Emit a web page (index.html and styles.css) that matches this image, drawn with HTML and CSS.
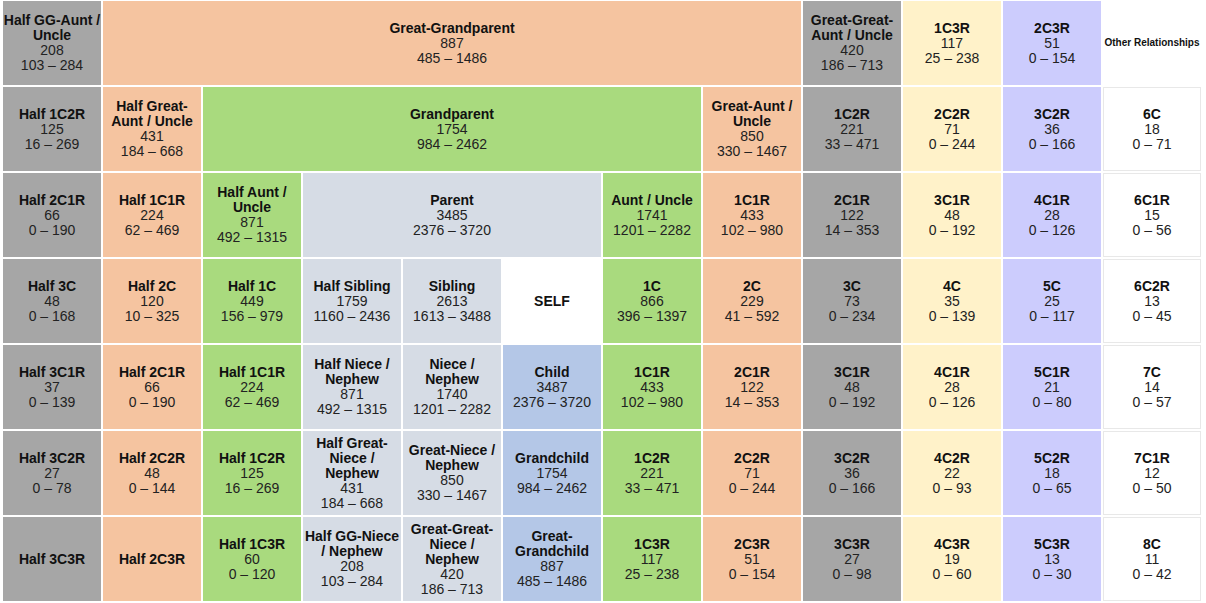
FILE: index.html
```html
<!DOCTYPE html>
<html>
<head>
<meta charset="utf-8">
<link rel="stylesheet" href="styles.css">
</head>
<body>
<div class="chart">
  <!-- Row 1 -->
  <div class="cell grey"><b>Half GG-Aunt / Uncle</b><span>208</span><span>103 – 284</span></div>
  <div class="cell peach span7"><b>Great-Grandparent</b><span>887</span><span>485 – 1486</span></div>
  <div class="cell grey"><b>Great-Great-<br>Aunt / Uncle</b><span>420</span><span>186 – 713</span></div>
  <div class="cell yellow"><b>1C3R</b><span>117</span><span>25 – 238</span></div>
  <div class="cell purple"><b>2C3R</b><span>51</span><span>0 – 154</span></div>
  <div class="cell note"><b>Other Relationships</b></div>

  <!-- Row 2 -->
  <div class="cell grey"><b>Half 1C2R</b><span>125</span><span>16 – 269</span></div>
  <div class="cell peach"><b>Half Great-<br>Aunt / Uncle</b><span>431</span><span>184 – 668</span></div>
  <div class="cell green span5"><b>Grandparent</b><span>1754</span><span>984 – 2462</span></div>
  <div class="cell peach"><b>Great-Aunt /<br>Uncle</b><span>850</span><span>330 – 1467</span></div>
  <div class="cell grey"><b>1C2R</b><span>221</span><span>33 – 471</span></div>
  <div class="cell yellow"><b>2C2R</b><span>71</span><span>0 – 244</span></div>
  <div class="cell purple"><b>3C2R</b><span>36</span><span>0 – 166</span></div>
  <div class="cell white"><b>6C</b><span>18</span><span>0 – 71</span></div>

  <!-- Row 3 -->
  <div class="cell grey"><b>Half 2C1R</b><span>66</span><span>0 – 190</span></div>
  <div class="cell peach"><b>Half 1C1R</b><span>224</span><span>62 – 469</span></div>
  <div class="cell green"><b>Half Aunt /<br>Uncle</b><span>871</span><span>492 – 1315</span></div>
  <div class="cell light span3"><b>Parent</b><span>3485</span><span>2376 – 3720</span></div>
  <div class="cell green"><b>Aunt / Uncle</b><span>1741</span><span>1201 – 2282</span></div>
  <div class="cell peach"><b>1C1R</b><span>433</span><span>102 – 980</span></div>
  <div class="cell grey"><b>2C1R</b><span>122</span><span>14 – 353</span></div>
  <div class="cell yellow"><b>3C1R</b><span>48</span><span>0 – 192</span></div>
  <div class="cell purple"><b>4C1R</b><span>28</span><span>0 – 126</span></div>
  <div class="cell white"><b>6C1R</b><span>15</span><span>0 – 56</span></div>

  <!-- Row 4 -->
  <div class="cell grey"><b>Half 3C</b><span>48</span><span>0 – 168</span></div>
  <div class="cell peach"><b>Half 2C</b><span>120</span><span>10 – 325</span></div>
  <div class="cell green"><b>Half 1C</b><span>449</span><span>156 – 979</span></div>
  <div class="cell light"><b>Half Sibling</b><span>1759</span><span>1160 – 2436</span></div>
  <div class="cell light"><b>Sibling</b><span>2613</span><span>1613 – 3488</span></div>
  <div class="cell self"><b>SELF</b></div>
  <div class="cell green"><b>1C</b><span>866</span><span>396 – 1397</span></div>
  <div class="cell peach"><b>2C</b><span>229</span><span>41 – 592</span></div>
  <div class="cell grey"><b>3C</b><span>73</span><span>0 – 234</span></div>
  <div class="cell yellow"><b>4C</b><span>35</span><span>0 – 139</span></div>
  <div class="cell purple"><b>5C</b><span>25</span><span>0 – 117</span></div>
  <div class="cell white"><b>6C2R</b><span>13</span><span>0 – 45</span></div>

  <!-- Row 5 -->
  <div class="cell grey"><b>Half 3C1R</b><span>37</span><span>0 – 139</span></div>
  <div class="cell peach"><b>Half 2C1R</b><span>66</span><span>0 – 190</span></div>
  <div class="cell green"><b>Half 1C1R</b><span>224</span><span>62 – 469</span></div>
  <div class="cell light"><b>Half Niece /<br>Nephew</b><span>871</span><span>492 – 1315</span></div>
  <div class="cell light"><b>Niece /<br>Nephew</b><span>1740</span><span>1201 – 2282</span></div>
  <div class="cell blue"><b>Child</b><span>3487</span><span>2376 – 3720</span></div>
  <div class="cell green"><b>1C1R</b><span>433</span><span>102 – 980</span></div>
  <div class="cell peach"><b>2C1R</b><span>122</span><span>14 – 353</span></div>
  <div class="cell grey"><b>3C1R</b><span>48</span><span>0 – 192</span></div>
  <div class="cell yellow"><b>4C1R</b><span>28</span><span>0 – 126</span></div>
  <div class="cell purple"><b>5C1R</b><span>21</span><span>0 – 80</span></div>
  <div class="cell white"><b>7C</b><span>14</span><span>0 – 57</span></div>

  <!-- Row 6 -->
  <div class="cell grey"><b>Half 3C2R</b><span>27</span><span>0 – 78</span></div>
  <div class="cell peach"><b>Half 2C2R</b><span>48</span><span>0 – 144</span></div>
  <div class="cell green"><b>Half 1C2R</b><span>125</span><span>16 – 269</span></div>
  <div class="cell light"><b>Half Great-<br>Niece /<br>Nephew</b><span>431</span><span>184 – 668</span></div>
  <div class="cell light"><b>Great-Niece /<br>Nephew</b><span>850</span><span>330 – 1467</span></div>
  <div class="cell blue"><b>Grandchild</b><span>1754</span><span>984 – 2462</span></div>
  <div class="cell green"><b>1C2R</b><span>221</span><span>33 – 471</span></div>
  <div class="cell peach"><b>2C2R</b><span>71</span><span>0 – 244</span></div>
  <div class="cell grey"><b>3C2R</b><span>36</span><span>0 – 166</span></div>
  <div class="cell yellow"><b>4C2R</b><span>22</span><span>0 – 93</span></div>
  <div class="cell purple"><b>5C2R</b><span>18</span><span>0 – 65</span></div>
  <div class="cell white"><b>7C1R</b><span>12</span><span>0 – 50</span></div>

  <!-- Row 7 -->
  <div class="cell grey"><b>Half 3C3R</b></div>
  <div class="cell peach"><b>Half 2C3R</b></div>
  <div class="cell green"><b>Half 1C3R</b><span>60</span><span>0 – 120</span></div>
  <div class="cell light"><b>Half GG-Niece<br>/ Nephew</b><span>208</span><span>103 – 284</span></div>
  <div class="cell light"><b>Great-Great-<br>Niece /<br>Nephew</b><span>420</span><span>186 – 713</span></div>
  <div class="cell blue"><b>Great-<br>Grandchild</b><span>887</span><span>485 – 1486</span></div>
  <div class="cell green"><b>1C3R</b><span>117</span><span>25 – 238</span></div>
  <div class="cell peach"><b>2C3R</b><span>51</span><span>0 – 154</span></div>
  <div class="cell grey"><b>3C3R</b><span>27</span><span>0 – 98</span></div>
  <div class="cell yellow"><b>4C3R</b><span>19</span><span>0 – 60</span></div>
  <div class="cell purple"><b>5C3R</b><span>13</span><span>0 – 30</span></div>
  <div class="cell white"><b>8C</b><span>11</span><span>0 – 42</span></div>
</div>
</body>
</html>
```
FILE: styles.css
```css
html, body {
  margin: 0;
  padding: 0;
  background: #ffffff;
}

.chart {
  display: grid;
  grid-template-columns: repeat(12, 98px);
  grid-template-rows: repeat(7, 84px);
  gap: 2px;
  padding: 1px 0 0 3px;
  width: max-content;
  background: #ffffff;
  font-family: "Liberation Sans", Arial, sans-serif;
  font-size: 14px;
  line-height: 15px;
  color: #151515;
}

.cell {
  box-sizing: border-box;
  display: flex;
  flex-direction: column;
  align-items: center;
  justify-content: center;
  text-align: center;
}

.cell b {
  font-weight: bold;
  color: #111111;
}

.cell span {
  display: block;
  color: #222222;
}

.span7 { grid-column: span 7; }
.span5 { grid-column: span 5; }
.span3 { grid-column: span 3; }

.grey   { background: #a6a6a6; }
.peach  { background: #f5c4a0; }
.green  { background: #a9da7e; }
.light  { background: #d6dce5; }
.blue   { background: #b4c7e7; }
.yellow { background: #fff2c9; }
.purple { background: #ccccfd; }
.self   { background: #ffffff; }

.white {
  background: #ffffff;
  border: 1px solid #e8e8e8;
}

.note b {
  font-size: 10px;
  line-height: 12px;
  white-space: nowrap;
}
```
